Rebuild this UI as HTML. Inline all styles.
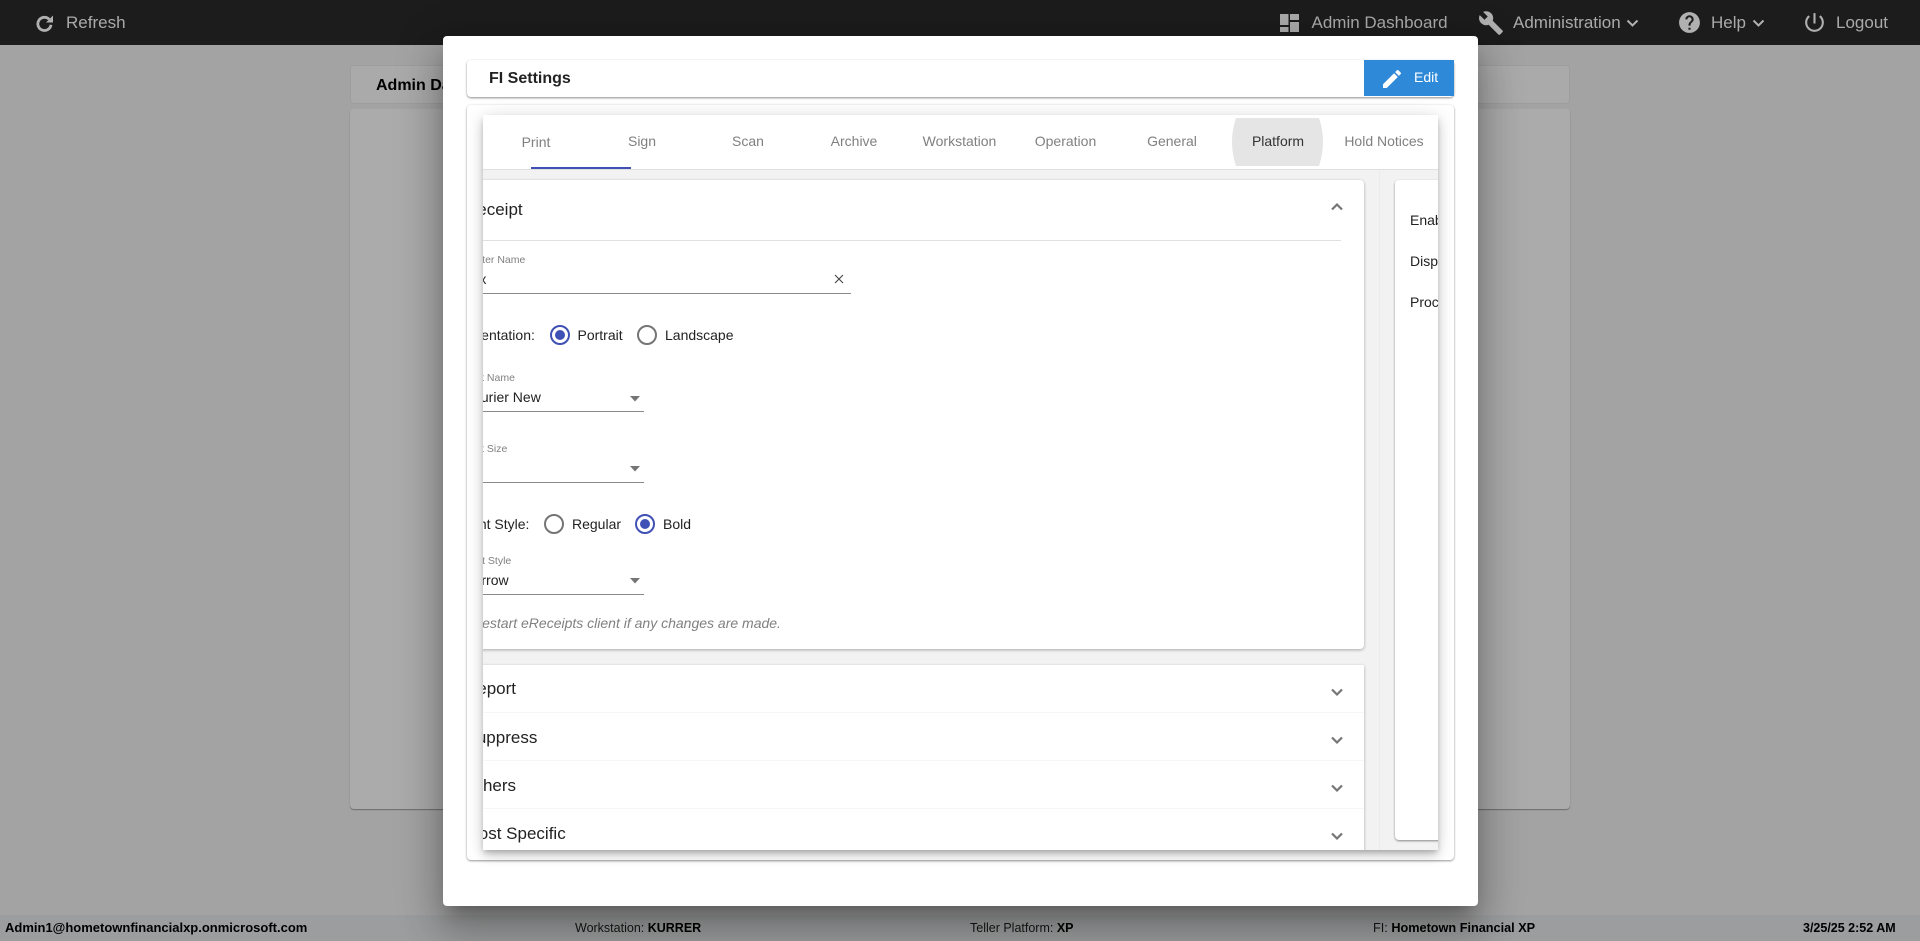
<!DOCTYPE html>
<html><head><meta charset="utf-8"><title>FI Settings</title>
<style>
*{box-sizing:border-box}
html,body{margin:0;padding:0;width:1920px;height:941px;overflow:hidden;background:#a3a3a3;font-family:"Liberation Sans",sans-serif}
.t{position:absolute;white-space:nowrap;line-height:20px;height:20px}
.a{position:absolute}
svg{position:absolute;display:block}
.nav{color:#aaa;font-size:17px}
.tab{color:#808080;font-size:14px;width:106px;text-align:center}
.lab{color:#808080;font-size:10.5px}
.val{color:#222;font-size:14px}
.acc{color:#222;font-size:17px}
.f{color:#111;font-size:12.5px}
.f b{color:#000}
</style></head><body>
<div class="a" style="left:0;top:0;width:1920px;height:45px;background:#1c1c1c"></div>
<svg style="left:36px;top:15px" width="17" height="17" viewBox="0 0 17 17"><path d="M13.200 4.300A6.600 6.600 0 1 0 15 9.800" fill="none" stroke="#b0b0b0" stroke-width="2.800"/><path d="M10 7.500h7V.5z" fill="#b0b0b0"/></svg>
<div class="t nav" style="left:66px;top:13px">Refresh</div>
<svg style="left:1280px;top:14px" width="19" height="18" viewBox="0 0 19 18" fill="#aaa"><path d="M0 0h8.500v11H0zM0 13h8.500v5H0zM10 0h9v6h-9zM10 8h9v10h-9z"/></svg>
<div class="t nav" style="left:1311.500px;top:13px">Admin Dashboard</div>
<svg style="left:1478px;top:10px" width="26" height="26" viewBox="0 0 24 24" fill="#b0b0b0"><path d="M22.700 19l-9.100-9.100c.9-2.300.4-5-1.500-6.900-2-2-5-2.400-7.400-1.300L9 6 6 9 1.600 4.700C.4 7.100.9 10.100 2.900 12.100c1.900 1.900 4.600 2.400 6.900 1.500l9.100 9.100c.4.4 1 .4 1.400 0l2.300-2.300c.5-.4.5-1.100.1-1.400z"/></svg>
<div class="t nav" style="left:1513px;top:13px">Administration</div>
<svg style="left:1626px;top:19px" width="13" height="9" viewBox="0 0 13 9" fill="none" stroke="#b0b0b0" stroke-width="2"><path d="M1.500 1.500l5 5 5-5"/></svg>
<svg style="left:1677px;top:10px" width="25" height="25" viewBox="0 0 24 24" fill="#b0b0b0"><path d="M12 2C6.480 2 2 6.480 2 12s4.480 10 10 10 10-4.480 10-10S17.520 2 12 2zm1 17h-2v-2h2v2zm2.070-7.750l-.9.920C13.450 12.900 13 13.500 13 15h-2v-.5c0-1.100.45-2.100 1.170-2.830l1.240-1.260c.37-.36.59-.86.59-1.410 0-1.100-.9-2-2-2s-2 .9-2 2H8c0-2.210 1.790-4 4-4s4 1.790 4 4c0 .88-.36 1.680-.93 2.250z"/></svg>
<div class="t nav" style="left:1711px;top:13px">Help</div>
<svg style="left:1752px;top:19px" width="13" height="9" viewBox="0 0 13 9" fill="none" stroke="#b0b0b0" stroke-width="2"><path d="M1.500 1.500l5 5 5-5"/></svg>
<svg style="left:1802px;top:10px" width="25" height="25" viewBox="0 0 24 24" fill="#b0b0b0"><path d="M13 3h-2v10h2V3zm4.830 2.170l-1.420 1.420C17.990 7.860 19 9.810 19 12c0 3.870-3.130 7-7 7s-7-3.130-7-7c0-2.190 1.010-4.140 2.580-5.420L6.170 5.170C4.230 6.820 3 9.260 3 12c0 4.970 4.030 9 9 9s9-4.030 9-9c0-2.740-1.230-5.180-3.170-6.830z"/></svg>
<div class="t nav" style="left:1836px;top:13px">Logout</div>

<div class="a" style="left:350px;top:65px;width:1220px;height:39px;background:#aaa;border:1px solid #9d9d9d;border-radius:4px"></div>
<div class="t" style="left:376px;top:76px;font-size:16px;font-weight:bold;color:#000">Admin Dashboard</div>
<div class="a" style="left:350px;top:109px;width:1220px;height:700px;background:#ababab;border-radius:4px;box-shadow:0 1px 1px rgba(0,0,0,.35)"></div>

<div class="a" style="left:0;top:915px;width:1920px;height:26px;background:#9c9d9e"></div>

<div class="a" style="left:443px;top:36px;width:1035px;height:870px;background:#fff;border-radius:4px;box-shadow:0 11px 15px -7px rgba(0,0,0,.25),0 24px 38px 3px rgba(0,0,0,.2),0 9px 46px 8px rgba(0,0,0,.14)"></div>

<div class="t f" style="left:5px;top:918px;font-size:13px"><b>Admin1@hometownfinancialxp.onmicrosoft.com</b></div>
<div class="t f" style="left:575px;top:918px">Workstation: <b>KURRER</b></div>
<div class="t f" style="left:970px;top:918px">Teller Platform: <b>XP</b></div>
<div class="t f" style="left:1373px;top:918px;font-size:12.7px">FI: <b>Hometown Financial XP</b></div>
<div class="t f" style="left:1803px;top:918px"><b>3/25/25 2:52 AM</b></div>

<div class="a" style="left:467px;top:60px;width:987px;height:37px;background:#fff;border-radius:4px;box-shadow:0 1px 2px rgba(0,0,0,.45)"></div>
<div class="t" style="left:489px;top:68.500px;font-size:16px;font-weight:bold;color:#222">FI Settings</div>
<div class="a" style="left:1364px;top:60px;width:90px;height:36px;background:#2e89d9"></div>
<svg style="left:1380px;top:67px" width="24" height="24" viewBox="0 0 24 24" fill="#fff"><path d="M3 17.250V21h3.750L17.810 9.940l-3.750-3.750L3 17.250zM20.710 7.040c.39-.39.39-1.020 0-1.410l-2.340-2.340c-.39-.39-1.020-.39-1.410 0l-1.830 1.830 3.750 3.750 1.830-1.830z"/></svg>
<div class="t" style="left:1414px;top:67px;font-size:14px;color:#fff">Edit</div>

<div class="a" style="left:467px;top:105px;width:987px;height:755px;background:#fff;border-radius:4px;box-shadow:0 1px 2px rgba(0,0,0,.4),0 0 3px rgba(0,0,0,.05)"></div>

<div class="a" style="left:483px;top:115px;width:955px;height:735px;background:#f2f2f2;box-shadow:0 3px 5px -1px rgba(0,0,0,.2),0 6px 10px 0 rgba(0,0,0,.14),0 1px 18px 0 rgba(0,0,0,.12)"></div>

<div class="a" style="left:483px;top:115px;width:955px;height:735px;overflow:hidden">
 <div class="a" style="left:-483px;top:-115px;width:1920px;height:941px">
  <div class="a" style="left:483px;top:115px;width:955px;height:55px;background:#fff;border-bottom:1px solid #dfdfdf"></div>
  <div class="a" style="left:531px;top:167px;width:100px;height:2px;background:#3f51b5"></div>
  <div class="a" style="left:1232px;top:118px;width:91px;height:48px;background:#e5e5e5;clip-path:ellipse(45.500px 58px at 50% 50%)"></div>
  <div class="t tab" style="left:483px;top:132px">Print</div>
  <div class="t tab" style="left:589px;top:131px">Sign</div>
  <div class="t tab" style="left:695px;top:131px">Scan</div>
  <div class="t tab" style="left:801px;top:131px">Archive</div>
  <div class="t tab" style="left:906.500px;top:131px">Workstation</div>
  <div class="t tab" style="left:1012.500px;top:131px">Operation</div>
  <div class="t tab" style="left:1119px;top:131px">General</div>
  <div class="t tab" style="left:1225px;top:131px;color:#333">Platform</div>
  <div class="t tab" style="left:1331px;top:131px">Hold Notices</div>

  <div class="a" style="left:1379px;top:170px;width:1px;height:680px;background:#ececec"></div>

  <div class="a" style="left:440px;top:180px;width:924px;height:469px;background:#fff;border-radius:4px;box-shadow:0 1px 3px rgba(0,0,0,.3)"></div>
  <div class="t acc" style="left:465px;top:200px">Receipt</div>
  <svg style="left:1330px;top:202px" width="14" height="10" viewBox="0 0 14 10" fill="none" stroke="#757575" stroke-width="2.200"><path d="M2 7.500L7 2.500l5 5"/></svg>
  <div class="a" style="left:460px;top:240px;width:881px;height:1px;background:#e0e0e0"></div>

  <div class="t lab" style="left:463.500px;top:250px">Printer Name</div>
  <div class="t val" style="left:463px;top:269px">Fax</div>
  <svg style="left:834px;top:274px" width="10" height="10" viewBox="0 0 10 10" fill="none" stroke="#444" stroke-width="1.100"><path d="M1 1l8 8M9 1l-8 8"/></svg>
  <div class="a" style="left:440px;top:293px;width:411px;height:1px;background:#8a8a8a"></div>

  <div class="t val" style="left:462.500px;top:325px">Orientation:</div>
  <svg style="left:549.500px;top:325px" width="20" height="20" viewBox="0 0 20 20"><circle cx="10" cy="10" r="9" fill="none" stroke="#3f51b5" stroke-width="2"/><circle cx="10" cy="10" r="5" fill="#3f51b5"/></svg>
  <div class="t val" style="left:577.500px;top:325px">Portrait</div>
  <svg style="left:637px;top:325px" width="20" height="20" viewBox="0 0 20 20"><circle cx="10" cy="10" r="9" fill="none" stroke="#757575" stroke-width="2"/></svg>
  <div class="t val" style="left:665px;top:325px">Landscape</div>

  <div class="t lab" style="left:463px;top:368px">Font Name</div>
  <div class="t val" style="left:463px;top:387px">Courier New</div>
  <svg style="left:629px;top:396px" width="12" height="6" viewBox="0 0 12 6" fill="#757575"><path d="M1 0h10L6 5.500z"/></svg>
  <div class="a" style="left:440px;top:411px;width:204px;height:1px;background:#8a8a8a"></div>

  <div class="t lab" style="left:463px;top:439px">Font Size</div>
  <svg style="left:629px;top:466px" width="12" height="6" viewBox="0 0 12 6" fill="#757575"><path d="M1 0h10L6 5.500z"/></svg>
  <div class="a" style="left:440px;top:482px;width:204px;height:1px;background:#8a8a8a"></div>

  <div class="t val" style="left:462.500px;top:514px">Font Style:</div>
  <svg style="left:543.500px;top:514px" width="20" height="20" viewBox="0 0 20 20"><circle cx="10" cy="10" r="9" fill="none" stroke="#757575" stroke-width="2"/></svg>
  <div class="t val" style="left:572px;top:514px">Regular</div>
  <svg style="left:635px;top:514px" width="20" height="20" viewBox="0 0 20 20"><circle cx="10" cy="10" r="9" fill="none" stroke="#3f51b5" stroke-width="2"/><circle cx="10" cy="10" r="5" fill="#3f51b5"/></svg>
  <div class="t val" style="left:663px;top:514px">Bold</div>

  <div class="t lab" style="left:464px;top:551px">Font Style</div>
  <div class="t val" style="left:463.500px;top:570px">Narrow</div>
  <svg style="left:629px;top:578px" width="12" height="6" viewBox="0 0 12 6" fill="#757575"><path d="M1 0h10L6 5.500z"/></svg>
  <div class="a" style="left:440px;top:594px;width:204px;height:1px;background:#8a8a8a"></div>

  <div class="t" style="left:472px;top:613px;font-size:14px;font-style:italic;color:#808080">Restart eReceipts client if any changes are made.</div>

  <div class="a" style="left:440px;top:665px;width:924px;height:200px;background:#fff;box-shadow:0 1px 3px rgba(0,0,0,.3)"></div>
  <div class="a" style="left:440px;top:712px;width:924px;height:1px;background:#f6f6f6"></div>
  <div class="a" style="left:440px;top:760px;width:924px;height:1px;background:#f6f6f6"></div>
  <div class="a" style="left:440px;top:808px;width:924px;height:1px;background:#f6f6f6"></div>
  <div class="t acc" style="left:465px;top:679px">Report</div>
  <div class="t acc" style="left:465.500px;top:728px">Suppress</div>
  <div class="t acc" style="left:465px;top:775.500px">Others</div>
  <div class="t acc" style="left:466.500px;top:823.500px">Host Specific</div>
  <svg style="left:1330px;top:687px" width="14" height="10" viewBox="0 0 14 10" fill="none" stroke="#757575" stroke-width="2.200"><path d="M2 2.500l5 5 5-5"/></svg>
  <svg style="left:1330px;top:735px" width="14" height="10" viewBox="0 0 14 10" fill="none" stroke="#757575" stroke-width="2.200"><path d="M2 2.500l5 5 5-5"/></svg>
  <svg style="left:1330px;top:783px" width="14" height="10" viewBox="0 0 14 10" fill="none" stroke="#757575" stroke-width="2.200"><path d="M2 2.500l5 5 5-5"/></svg>
  <svg style="left:1330px;top:831px" width="14" height="10" viewBox="0 0 14 10" fill="none" stroke="#757575" stroke-width="2.200"><path d="M2 2.500l5 5 5-5"/></svg>

  <div class="a" style="left:1395px;top:180px;width:200px;height:660px;background:#fff;border-radius:4px;box-shadow:0 1px 2px rgba(0,0,0,.45)"></div>
  <div class="t val" style="left:1410px;top:210px">Enable</div>
  <div class="t val" style="left:1410px;top:251px">Display</div>
  <div class="t val" style="left:1410px;top:292px">Process</div>
 </div>
</div>
</body></html>
